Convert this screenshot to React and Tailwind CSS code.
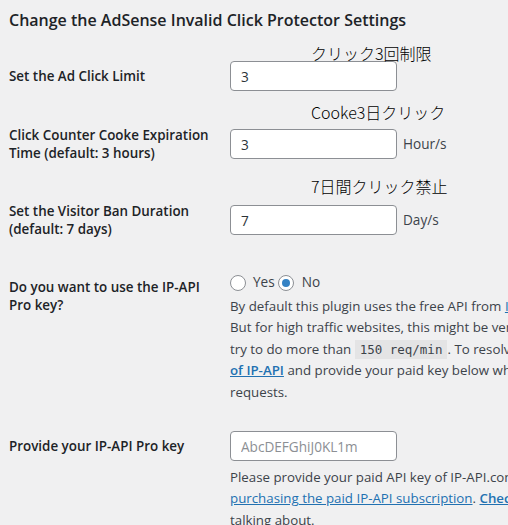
import React from "react";

const font = { fontFamily: '"Open Sans", "Noto Sans", sans-serif' };

const Field = ({ value, placeholder }) => (
  <input
    type="text"
    defaultValue={value}
    placeholder={placeholder}
    className="w-[167px] h-[30px] rounded-[4px] border border-[#8c8f94] bg-white px-[10px] text-[13.6px] text-[#2c3338] placeholder:text-[#8c8f94] outline-none"
  />
);

const Note = ({ children, top }) => (
  <span
    className={`absolute left-[81px] ${top} whitespace-nowrap text-[16px] font-light leading-none text-black`}
    style={{ fontFamily: '"Noto Sans CJK JP", sans-serif' }}
  >
    {children}
  </span>
);

const Radio = ({ checked }) => (
  <span className="inline-flex h-[16px] w-[16px] items-center justify-center rounded-full border border-[#8c8f94] bg-white">
    {checked && <span className="h-[8px] w-[8px] rounded-full bg-[#3582c4]" />}
  </span>
);

const Label = ({ children, className = "" }) => (
  <div className={`text-[13.4px] font-semibold leading-[18px] text-[#1d2327] ${className}`}>{children}</div>
);

export default function App() {
  return (
    <div className="min-h-screen w-[508px] overflow-hidden bg-[#f0f0f1] pl-[9px] text-[#3c434a]" style={font}>
      <h2 className="pt-[9px] text-[16px] font-semibold leading-[23px] text-[#1d2327] whitespace-nowrap">
        Change the AdSense Invalid Click Protector Settings
      </h2>

      <div className="mt-[29px] grid grid-cols-[221px_1fr] items-center">
        <Label>Set the Ad Click Limit</Label>
        <div className="relative flex items-center">
          <Note top="top-[-16px]">クリック3回制限</Note>
          <Field value="3" />
        </div>
      </div>

      <div className="mt-[35px] grid grid-cols-[221px_1fr] items-center">
        <Label>
          Click Counter Cooke Expiration
          <br />
          Time (default: 3 hours)
        </Label>
        <div className="relative flex items-center">
          <Note top="top-[-25px]">Cooke3日クリック</Note>
          <Field value="3" />
          <span className="ml-[6px] text-[13.6px]">Hour/s</span>
        </div>
      </div>

      <div className="mt-[40px] grid grid-cols-[221px_1fr] items-center">
        <Label>
          Set the Visitor Ban Duration
          <br />
          (default: 7 days)
        </Label>
        <div className="relative flex items-center">
          <Note top="top-[-27px]">7日間クリック禁止</Note>
          <Field value="7" />
          <span className="ml-[6px] text-[13.6px]">Day/s</span>
        </div>
      </div>

      <div className="mt-[34px] grid grid-cols-[221px_1fr] items-start">
        <Label className="pt-[6px]">
          Do you want to use the IP-API
          <br />
          Pro key?
        </Label>
        <div className="min-w-0 overflow-hidden">
          <div className="flex h-[21px] items-center text-[13.6px]">
            <Radio />
            <span className="ml-[7px]">Yes</span>
            <span className="ml-[3px] flex"><Radio checked /></span>
            <span className="ml-[8px]">No</span>
          </div>
          <p className="mt-[3px] whitespace-nowrap text-[13.3px] leading-[21.4px]">
            By default this plugin uses the free API from{" "}
            <a className="text-[#2271b1] underline">IP-API.com</a>
            <br />
            But for high traffic websites, this might be very limited as the free
            <br />
            try to do more than{" "}
            <code
              className="bg-[#e4e4e5] px-[5px] py-[2px] text-[12.5px]"
              style={{ fontFamily: '"DejaVu Sans Mono", monospace' }}
            >
              150 req/min
            </code>
            . To resolve this issue, you can purchase the paid version
            <br />
            <a className="font-semibold text-[#2271b1] underline">of IP-API</a> and provide your paid key below which
            <br />
            requests.
          </p>
        </div>
      </div>

      <div className="mt-[28px] grid grid-cols-[221px_1fr] items-center">
        <Label>Provide your IP-API Pro key</Label>
        <div>
          <Field placeholder="AbcDEFGhiJ0KL1m" />
        </div>
      </div>
      <div className="grid grid-cols-[221px_1fr]">
        <div />
        <p className="mt-[6px] min-w-0 overflow-hidden whitespace-nowrap text-[13.3px] leading-[21.4px]">
          Please provide your paid API key of IP-API.com here after
          <br />
          <a className="text-[#2271b1] underline">purchasing the paid IP-API subscription</a>.{" "}
          <a className="font-semibold text-[#2271b1] underline">Check here</a>
          <br />
          talking about.
        </p>
      </div>
    </div>
  );
}
